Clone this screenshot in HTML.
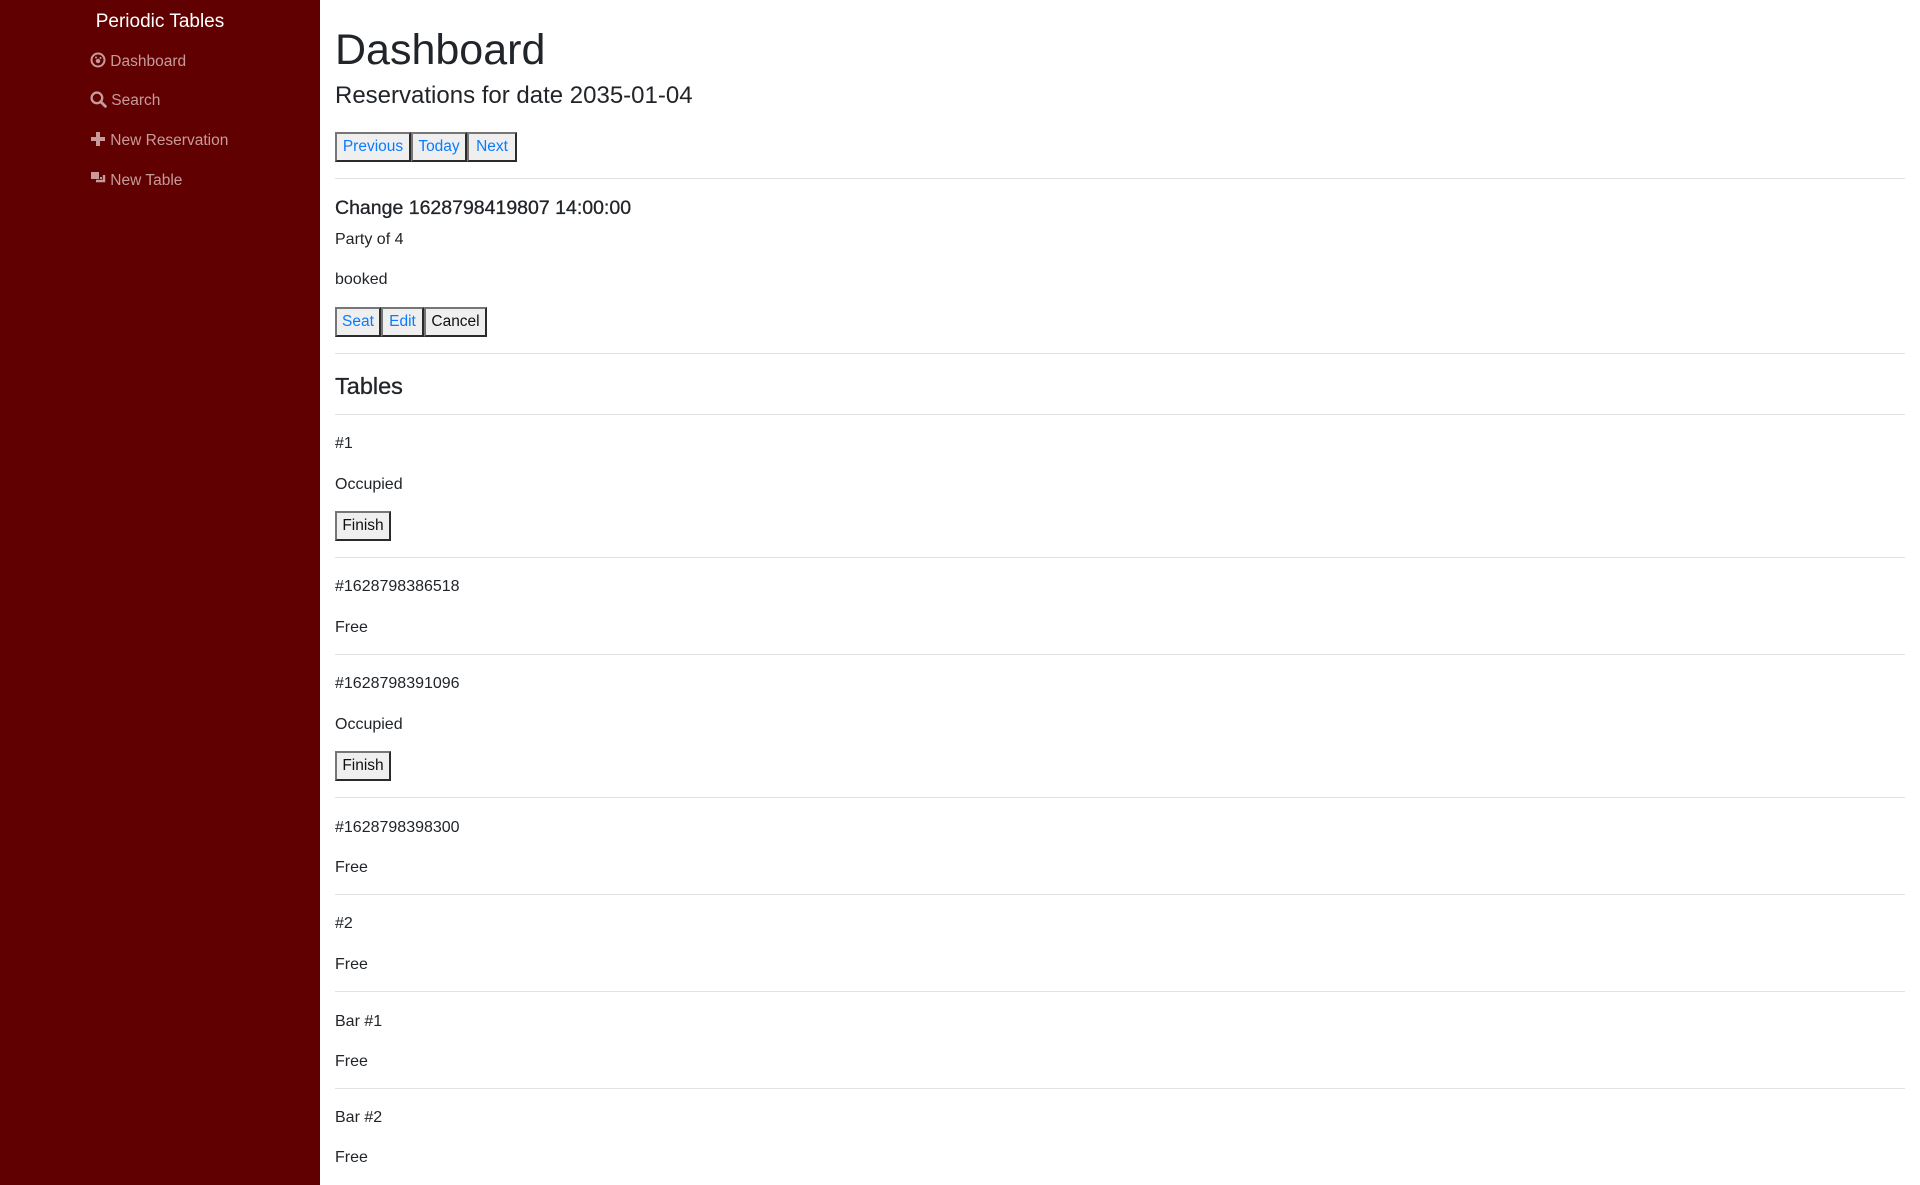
<!DOCTYPE html>
<html><head><meta charset="utf-8">
<style>
*{box-sizing:border-box;margin:0;padding:0}
html,body{width:1920px;height:1185px;overflow:hidden;background:#fff;font-family:"Liberation Sans",Arial,sans-serif;color:#212529}
.sb{position:absolute;left:0;top:0;width:320px;height:1185px;background:#600000}
.a{position:absolute;white-space:nowrap}
.t{font-size:16px;line-height:24px;height:24px;margin-top:1px}
.nav{color:#c79b9b;font-size:15.5px;line-height:22px}
.hr{position:absolute;left:335px;width:1570px;height:1px;background:#e2e2e2}
.btns{position:absolute;display:flex;height:30px}
.b{height:30px;background:#efefef;border:2px solid;border-color:#767676 #2b2b2b #2b2b2b #767676;font-size:15.5px;line-height:26px;text-align:center;color:#0a7bff}
.b.k{color:#111}
</style></head><body>
<div class="sb">
  <div class="a" style="left:0;width:320px;text-align:center;top:10px;font-size:19px;line-height:24px;color:#fff">Periodic Tables</div>
  <div class="a nav" style="left:90px;top:51px">
    <svg width="16" height="16" viewBox="0 0 16 16" style="vertical-align:-2px"><circle cx="8" cy="8" r="6.5" fill="none" stroke="#c79b9b" stroke-width="2"/><circle cx="8" cy="9" r="2.2" fill="#c79b9b"/><circle cx="6" cy="5.5" r="1" fill="#c79b9b"/><circle cx="10.5" cy="6" r="1" fill="#c79b9b"/></svg> Dashboard</div>
  <div class="a nav" style="left:90px;top:90px">
    <svg width="17" height="17" viewBox="0 0 16 16" style="vertical-align:-3px"><circle cx="6.5" cy="6.5" r="5" fill="none" stroke="#c79b9b" stroke-width="2.2"/><path d="M10 10l4.5 4.5" stroke="#c79b9b" stroke-width="2.6" stroke-linecap="round"/></svg> Search</div>
  <div class="a nav" style="left:90px;top:130px">
    <svg width="16" height="16" viewBox="0 0 16 16" style="vertical-align:-2px"><path d="M6 1h4v5h5v4h-5v5H6v-5H1V6h5z" fill="#c79b9b"/></svg> New Reservation</div>
  <div class="a nav" style="left:90px;top:170px">
    <svg width="16" height="16" viewBox="0 0 16 16" style="vertical-align:-2px"><rect x="1" y="1" width="8" height="7" fill="#c79b9b"/><path d="M6 10h8V4" fill="none" stroke="#c79b9b" stroke-width="2.4"/><rect x="10" y="6" width="2" height="2" fill="#c79b9b"/></svg> New Table</div>
</div>

<div class="a" style="left:335px;top:23px;font-size:43px;line-height:54px">Dashboard</div>
<div class="a" style="left:335px;top:81px;font-size:24px;line-height:30px">Reservations for date 2035-01-04</div>
<div class="btns" style="left:335px;top:132px">
  <div class="b" style="width:76px">Previous</div><div class="b" style="width:56px">Today</div><div class="b" style="width:50px">Next</div>
</div>
<div class="hr" style="top:178px"></div>

<div class="a" style="left:335px;top:195px;font-size:19.5px;line-height:26px;-webkit-text-stroke:0.3px #212529">Change 1628798419807 14:00:00</div>
<div class="a t" style="left:335px;top:227px">Party of 4</div>
<div class="a t" style="left:335px;top:267px">booked</div>
<div class="btns" style="left:335px;top:307px">
  <div class="b" style="width:46px">Seat</div><div class="b" style="width:43px">Edit</div><div class="b k" style="width:63px">Cancel</div>
</div>
<div class="hr" style="top:353px"></div>
<div class="a" style="left:335px;top:371px;font-size:23.5px;line-height:30px;-webkit-text-stroke:0.3px #212529">Tables</div>
<div class="hr" style="top:414px"></div>

<div class="a t" style="left:335px;top:431px">#1</div>
<div class="a t" style="left:335px;top:472px">Occupied</div>
<div class="btns" style="left:335px;top:511px"><div class="b k" style="width:56px">Finish</div></div>
<div class="hr" style="top:557px"></div>

<div class="a t" style="left:335px;top:574px">#1628798386518</div>
<div class="a t" style="left:335px;top:615px">Free</div>
<div class="hr" style="top:654px"></div>

<div class="a t" style="left:335px;top:671px">#1628798391096</div>
<div class="a t" style="left:335px;top:712px">Occupied</div>
<div class="btns" style="left:335px;top:751px"><div class="b k" style="width:56px">Finish</div></div>
<div class="hr" style="top:797px"></div>

<div class="a t" style="left:335px;top:815px">#1628798398300</div>
<div class="a t" style="left:335px;top:855px">Free</div>
<div class="hr" style="top:894px"></div>

<div class="a t" style="left:335px;top:911px">#2</div>
<div class="a t" style="left:335px;top:952px">Free</div>
<div class="hr" style="top:991px"></div>

<div class="a t" style="left:335px;top:1009px">Bar #1</div>
<div class="a t" style="left:335px;top:1049px">Free</div>
<div class="hr" style="top:1088px"></div>

<div class="a t" style="left:335px;top:1105px">Bar #2</div>
<div class="a t" style="left:335px;top:1145px">Free</div>
</body></html>
